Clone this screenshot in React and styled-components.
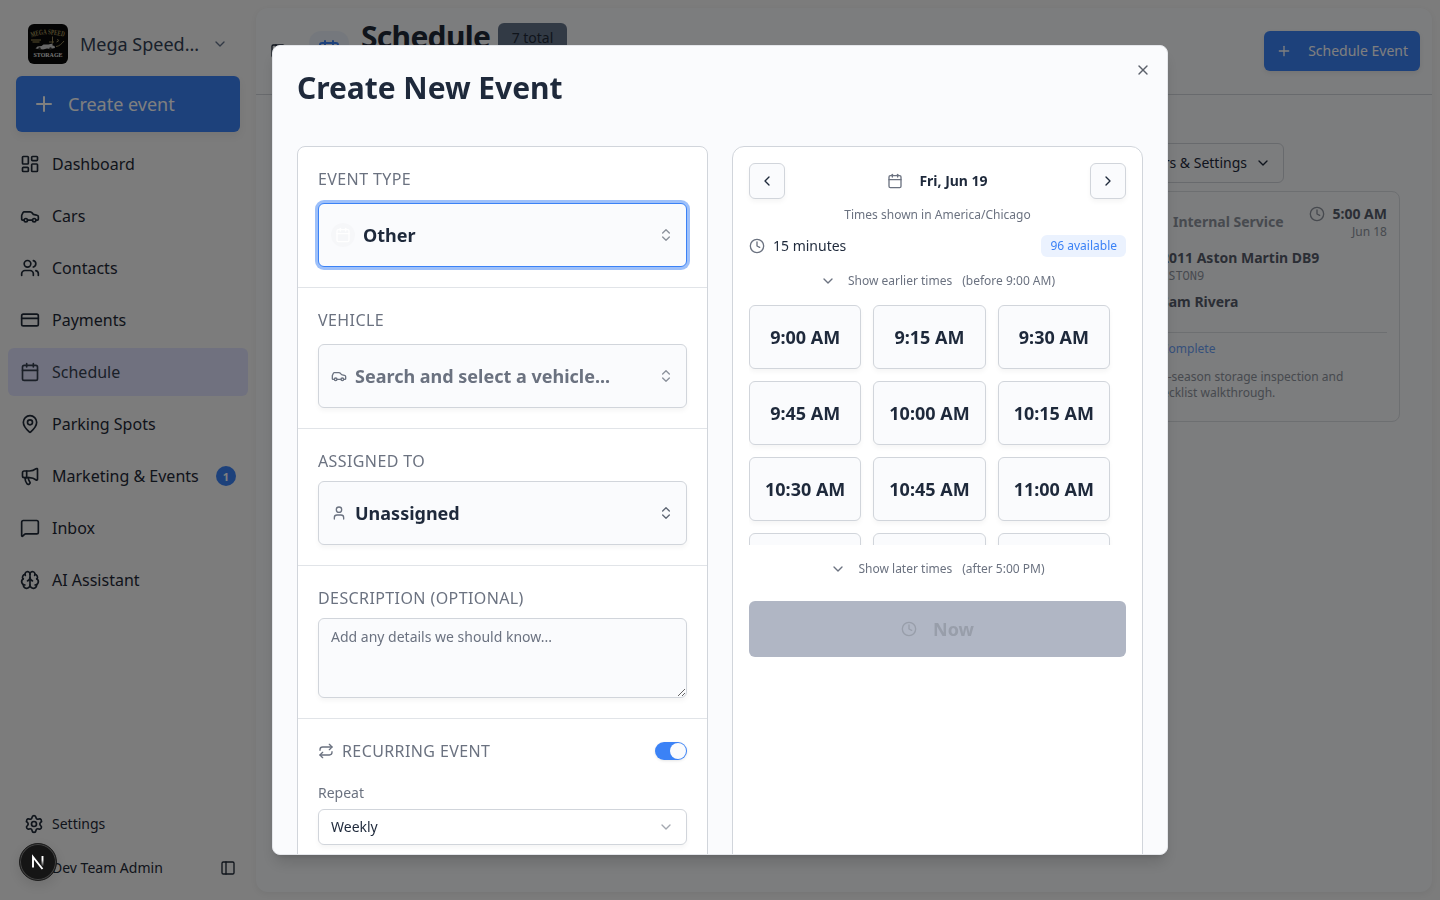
import React from "react";
import styled, { createGlobalStyle, css } from "styled-components";
import {
  LayoutDashboard, Car, Users, CreditCard, Calendar, MapPin, Megaphone,
  MessageSquare, Brain, Settings, PanelLeft, ChevronDown, ChevronLeft,
  ChevronRight, ChevronsUpDown, Plus, X, Clock, User, Repeat,
} from "lucide-react";

const c = {
  ink: "#1e293b",
  muted: "#6b7280",
  primary: "#3b82f6",
  border: "#d1d5db",
  surface: "#fafbfd",
};

const Global = createGlobalStyle`
  *, *::before, *::after { box-sizing: border-box; }
  html, body, #root { height: 100%; }
  body {
    margin: 0;
    overflow: hidden;
    background: #f8f8f8;
    color: ${c.ink};
    font-family: "Noto Sans", sans-serif;
    font-size: 14px;
    line-height: 20px;
  }
  button, textarea { font: inherit; color: inherit; margin: 0; }
  h1, h2, p { margin: 0; }
  svg { flex-shrink: 0; display: block; }
`;

const Shell = styled.div`
  display: flex;
  height: 900px;
`;

/* Sidebar */
const Sidebar = styled.aside`
  width: 256px;
  display: flex;
  flex-direction: column;
  padding: 16px 8px 12px;
`;
const OrgSwitch = styled.div`
  display: flex;
  align-items: center;
  gap: 12px;
  height: 56px;
  padding: 0 20px;
  font-size: 18px;
  line-height: 28px;
  color: #334155;
  span { width: 120px; white-space: nowrap; }
  > svg { color: #64748b; }
`;
const OrgLogo = styled.div`
  width: 40px;
  height: 40px;
  border-radius: 6px;
  overflow: hidden;
  background: #080808;
`;
const CreateButton = styled.button`
  display: flex;
  align-items: center;
  gap: 12px;
  height: 56px;
  margin: 4px 8px 8px;
  padding: 0 16px;
  border: 0;
  border-radius: 6px;
  background: ${c.primary};
  color: #fff;
  font-size: 18px;
  box-shadow: 0 4px 8px rgba(0, 0, 0, 0.06);
`;
const Nav = styled.nav`
  display: flex;
  flex-direction: column;
  gap: 4px;
  width: 240px;
`;
const NavItem = styled.a`
  display: flex;
  align-items: center;
  gap: 12px;
  height: 48px;
  padding: 0 12px;
  border-radius: 6px;
  font-size: 16px;
  color: ${(p) => (p.$active ? "#374151" : "#1f2937")};
  background: ${(p) => (p.$active ? "#e0e3ff" : "transparent")};
`;
const Count = styled.span`
  display: grid;
  place-items: center;
  width: 20px;
  height: 20px;
  margin-left: auto;
  border-radius: 50%;
  background: ${c.primary};
  color: #fff;
  font-size: 11px;
  font-weight: 700;
  line-height: 1;
`;
const SidebarFooter = styled.div`
  display: flex;
  flex-direction: column;
  gap: 4px;
  margin-top: auto;
  width: 240px;
`;
const FooterRow = styled.div`
  display: flex;
  align-items: center;
  gap: 8px;
  height: 40px;
  padding: 0 12px 0 ${(p) => (p.$account ? 44 : 16)}px;
  color: #1f2937;
  svg:last-child { margin-left: ${(p) => (p.$account ? "auto" : "0")}; }
`;

/* Page behind the dialog */
const Main = styled.main`
  flex: 1;
  margin: 8px 8px 8px 0;
  border-radius: 12px;
  background: #f8fafc;
  box-shadow: 0 2px 6px rgba(0, 0, 0, 0.06);
`;
const PageHeader = styled.header`
  display: flex;
  align-items: center;
  height: 87px;
  padding: 0 12px 0 14px;
  border-bottom: 1px solid ${c.border};
`;
const IconTile = styled.div`
  display: grid;
  place-items: center;
  width: 40px;
  height: 40px;
  margin: 0 12px 0 23px;
  border-radius: 12px;
  background: #ebf1fb;
  color: ${c.primary};
`;
const TitleRow = styled.div`
  display: flex;
  align-items: center;
  gap: 8px;
  margin-bottom: 28px;
  h1 {
    font-size: 30px;
    line-height: 36px;
    font-weight: 700;
    letter-spacing: -0.7px;
    color: #1f2937;
  }
`;
const TotalBadge = styled.span`
  height: 30px;
  margin-top: 2px;
  padding: 5px 13.5px;
  border-radius: 6px;
  background: #64748b;
  color: #1f2937;
  font-size: 14px;
`;
const ScheduleButton = styled.button`
  display: flex;
  align-items: center;
  gap: 16px;
  height: 40px;
  margin-left: auto;
  padding: 0 12px;
  border: 0;
  border-radius: 6px;
  background: ${c.primary};
  color: #fff;
  box-shadow: 0 2px 5px rgba(0, 0, 0, 0.08);
`;
const PageBody = styled.div`
  display: flex;
  flex-direction: column;
  align-items: flex-end;
  gap: 8px;
  padding: 48px 32px 0;
`;
const FilterButton = styled.button`
  display: flex;
  align-items: center;
  gap: 8px;
  height: 40px;
  margin-right: 116px;
  padding: 0 12px;
  border: 1px solid ${c.border};
  border-radius: 6px;
  background: transparent;
`;
const EventCard = styled.article`
  width: 264px;
  height: 231px;
  padding: 12px;
  border: 1px solid ${c.border};
  border-radius: 8px;
  opacity: 0.75;
`;
const CardTop = styled.div`
  display: flex;
  align-items: center;
  justify-content: space-between;
  margin-bottom: 8px;
  padding-left: 24px;
  font-weight: 700;
  color: ${c.muted};
`;
const CardTime = styled.div`
  text-align: right;
  div { display: flex; align-items: center; gap: 8px; }
  strong { font-weight: 700; color: ${c.ink}; }
  small { display: block; font-size: 12px; line-height: 16px; font-weight: 400; }
`;
const CardLine = styled.div`
  padding-left: 12px;
  white-space: nowrap;
  font-weight: 700;
`;
const Plate = styled.div`
  margin-bottom: 8px;
  padding-left: 12px;
  font: 12px/16px "Noto Sans Mono", "Roboto Mono", "Liberation Mono", monospace;
  color: ${c.muted};
`;
const CardStatus = styled.div`
  margin-top: 20px;
  padding: 8px 0 0 12px;
  border-top: 1px solid ${c.border};
  font-size: 12px;
  line-height: 16px;
  color: ${c.primary};
`;
const CardNote = styled.p`
  margin-top: 12px;
  font-size: 12px;
  line-height: 16px;
  color: ${c.muted};
`;

/* Dialog */
const Overlay = styled.div`
  position: fixed;
  inset: 0;
  display: grid;
  place-items: center;
  background: rgba(0, 0, 0, 0.5);
`;
const Dialog = styled.section`
  position: relative;
  width: 896px;
  height: 810px;
  padding: 24px;
  overflow: hidden;
  border: 1px solid #e5e7eb;
  border-radius: 8px;
  background: ${c.surface};
  box-shadow: 0 10px 15px -3px rgba(0, 0, 0, 0.15), 0 4px 6px -4px rgba(0, 0, 0, 0.15);
  h2 {
    height: 76px;
    font-size: 30px;
    line-height: 36px;
    font-weight: 700;
    letter-spacing: -0.05px;
  }
`;
const CloseButton = styled.button`
  position: absolute;
  top: 16px;
  right: 16px;
  padding: 0;
  border: 0;
  background: none;
  color: #5b616b;
`;
const Columns = styled.div`
  display: grid;
  grid-template-columns: 1fr 1fr;
  gap: 24px;
`;
const Panel = styled.div`
  height: 820px;
  border: 1px solid ${c.border};
  border-radius: ${(p) => p.$radius}px;
  background: #fff;
`;
const Section = styled.div`
  display: flex;
  flex-direction: column;
  gap: ${(p) => p.$gap || 8}px;
  padding: 20px;
  border-bottom: 1px solid #e1e4e8;
`;
const Label = styled.div`
  display: flex;
  align-items: center;
  gap: 8px;
  font-size: 16px;
  line-height: 24px;
  letter-spacing: 0.4px;
  text-transform: uppercase;
  color: ${c.muted};
`;
const fieldFrame = css`
  border: 1px solid ${c.border};
  border-radius: 6px;
  background: ${c.surface};
  box-shadow: 0 3px 5px rgba(0, 0, 0, 0.04);
`;
const Picker = styled.button`
  ${fieldFrame}
  display: flex;
  align-items: center;
  gap: 8px;
  height: 64px;
  padding: 0 12px;
  font-size: 18px;
  font-weight: 700;
  color: ${(p) => (p.$placeholder ? c.muted : c.ink)};
  svg { color: ${c.muted}; }
  > svg:last-child { margin-left: auto; color: ${c.ink}; opacity: ${(p) => (p.$strong ? 0.7 : 0.5)}; }
  ${(p) => p.$focused && css`
    border-color: ${c.primary};
    box-shadow: 0 0 0 3px rgba(59, 130, 246, 0.5);
  `}
`;
const TypeDot = styled.span`
  display: grid;
  place-items: center;
  width: 24px;
  height: 24px;
  border-radius: 50%;
  background: #f6f7f9;
  svg { color: #fff; }
`;
const Description = styled.textarea`
  ${fieldFrame}
  display: block;
  width: 100%;
  height: 80px;
  padding: 8px 12px;
  outline: 0;
  resize: vertical;
  &::placeholder { color: ${c.muted}; opacity: 1; }
`;
const RecurringRow = styled.div`
  display: flex;
  align-items: center;
  justify-content: space-between;
  margin-bottom: 14px;
`;
const Toggle = styled.span`
  display: flex;
  justify-content: flex-end;
  align-items: center;
  width: 32px;
  height: 18px;
  padding: 1px;
  border-radius: 9px;
  background: ${c.primary};
  box-shadow: 0 1px 3px rgba(0, 0, 0, 0.1);
  &::after {
    content: "";
    width: 16px;
    height: 16px;
    border-radius: 50%;
    background: ${c.surface};
  }
`;
const SmallLabel = styled.div`
  color: ${c.muted};
`;
const Select = styled.button`
  ${fieldFrame}
  display: flex;
  align-items: center;
  justify-content: space-between;
  height: 36px;
  padding: 0 12px;
  background: #fff;
  svg { opacity: 0.4; }
`;

const Slots = styled.div`
  display: flex;
  flex-direction: column;
  padding: 16px;
`;
const DateRow = styled.div`
  display: flex;
  align-items: center;
  justify-content: space-between;
`;
const ArrowButton = styled.button`
  ${fieldFrame}
  display: grid;
  place-items: center;
  width: 36px;
  height: 36px;
  padding: 0;
`;
const DateLabel = styled.div`
  display: flex;
  align-items: center;
  gap: 16px;
  font-weight: 700;
  svg { color: ${c.muted}; }
`;
const ZoneNote = styled.div`
  margin: 8px 0 12px;
  font-size: 12px;
  line-height: 16px;
  text-align: center;
  color: ${c.muted};
`;
const DurationRow = styled.div`
  display: flex;
  align-items: center;
  gap: 8px;
  height: 22px;
  svg { color: ${c.muted}; }
`;
const Available = styled.span`
  margin-left: auto;
  padding: 3px 9px;
  border-radius: 6px;
  background: #ebf2fe;
  color: ${c.primary};
  font-size: 12px;
  line-height: 16px;
`;
const MoreButton = styled.button`
  display: flex;
  align-items: center;
  justify-content: center;
  height: 32px;
  margin: 8px 0;
  padding: 0;
  border: 0;
  background: none;
  font-size: 12px;
  color: ${c.muted};
  svg { margin-right: 12px; }
  small { margin-left: 10px; font-size: 12px; }
`;
const SlotGrid = styled.div`
  display: grid;
  grid-template-columns: repeat(3, 1fr);
  grid-auto-rows: 64px;
  gap: 12px;
  height: 240px;
  padding-right: 16px;
  overflow: hidden;
`;
const Slot = styled.button`
  ${fieldFrame}
  padding: 0;
  font-size: 18px;
  font-weight: 700;
`;
const NowButton = styled.button`
  display: flex;
  align-items: center;
  justify-content: center;
  gap: 16px;
  height: 56px;
  margin-top: 8px;
  border: 0;
  border-radius: 6px;
  background: #b0b6c4;
  color: #989eaa;
  font-size: 18px;
  font-weight: 700;
`;

const DevBadge = styled.div`
  position: fixed;
  left: 19px;
  top: 843px;
  display: grid;
  place-items: center;
  width: 38px;
  height: 38px;
  border: 1px solid #1c1c1c;
  border-radius: 50%;
  background: #151515;
  box-shadow: inset 0 0 0 1px #444, 0 4px 14px rgba(0, 0, 0, 0.12);
`;

const navItems = [
  [LayoutDashboard, "Dashboard"],
  [Car, "Cars"],
  [Users, "Contacts"],
  [CreditCard, "Payments"],
  [Calendar, "Schedule"],
  [MapPin, "Parking Spots"],
  [Megaphone, "Marketing & Events", 1],
  [MessageSquare, "Inbox"],
  [Brain, "AI Assistant"],
];

const times = [
  "9:00 AM", "9:15 AM", "9:30 AM", "9:45 AM", "10:00 AM", "10:15 AM",
  "10:30 AM", "10:45 AM", "11:00 AM",
];

function StorageLogo() {
  return (
    <svg width="40" height="40" viewBox="0 0 40 40">
      <defs>
        <path id="logoArc" d="M3.5 13.2 Q20 7.5 37 13.2" />
      </defs>
      <text fontFamily="Liberation Serif, serif" fontWeight="700" fontSize="7.4" fill="#a5975c" textLength="33" lengthAdjust="spacingAndGlyphs">
        <textPath href="#logoArc">MEGA SPEED</textPath>
      </text>
      <path d="M3 16h10M4.5 18h7" stroke="#75683e" strokeWidth="1.3" />
      <path d="M7.5 24.5l2-2 4-.5 2-1.500h5l4-1v2l2 .5.5 2-5 1-3-.5-4 1z" fill="#cfcfcf" />
      <path d="M24.500 12.500v7M21 18h5M28 22.500c3 0 6-3 8-5.500M29.500 15l1 2-2 1" stroke="#94875a" strokeWidth="1" fill="none" />
      <circle cx="11.500" cy="24.500" r="1.200" fill="#333" />
      <circle cx="22.500" cy="24.500" r="1.200" fill="#333" />
      <text x="5.5" y="33" fontFamily="Liberation Serif, serif" fontWeight="700" fontSize="7" fill="#e5e5e5" textLength="29" lengthAdjust="spacingAndGlyphs">STORAGE</text>
    </svg>
  );
}

export default function App() {
  return (
    <>
      <Global />
      <Shell>
        <Sidebar>
          <OrgSwitch>
            <OrgLogo><StorageLogo /></OrgLogo>
            <span>Mega Speed...</span>
            <ChevronDown size={16} />
          </OrgSwitch>
          <CreateButton><Plus size={24} />Create event</CreateButton>
          <Nav>
            {navItems.map(([Icon, name, count]) => (
              <NavItem key={name} $active={name === "Schedule"}>
                <Icon size={20} />
                {name}
                {count && <Count>{count}</Count>}
              </NavItem>
            ))}
          </Nav>
          <SidebarFooter>
            <FooterRow><Settings size={20} />Settings</FooterRow>
            <FooterRow $account>Dev Team Admin<PanelLeft size={16} /></FooterRow>
          </SidebarFooter>
        </Sidebar>

        <Main>
          <PageHeader>
            <PanelLeft size={16} />
            <IconTile><Calendar size={24} /></IconTile>
            <TitleRow>
              <h1>Schedule</h1>
              <TotalBadge>7 total</TotalBadge>
            </TitleRow>
            <ScheduleButton><Plus size={16} />Schedule Event</ScheduleButton>
          </PageHeader>
          <PageBody>
            <FilterButton>Filters &amp; Settings<ChevronDown size={16} /></FilterButton>
            <EventCard>
              <CardTop>
                Internal Service
                <CardTime>
                  <div><Clock size={16} /><strong>5:00 AM</strong></div>
                  <small>Jun 18</small>
                </CardTime>
              </CardTop>
              <CardLine>2011 Aston Martin DB9</CardLine>
              <Plate>ASTON9</Plate>
              <CardLine>Sam Rivera</CardLine>
              <CardStatus>Complete</CardStatus>
              <CardNote>Pre-season storage inspection and checklist walkthrough.</CardNote>
            </EventCard>
          </PageBody>
        </Main>
      </Shell>

      <Overlay>
        <Dialog>
          <h2>Create New Event</h2>
          <CloseButton><X size={16} /></CloseButton>
          <Columns>
            <Panel $radius={8}>
              <Section $gap={12}>
                <Label>Event Type</Label>
                <Picker $focused>
                  <TypeDot><Calendar size={16} /></TypeDot>
                  Other
                  <ChevronsUpDown size={16} />
                </Picker>
              </Section>
              <Section $gap={12}>
                <Label>Vehicle</Label>
                <Picker $placeholder>
                  <Car size={16} />
                  Search and select a vehicle...
                  <ChevronsUpDown size={16} />
                </Picker>
              </Section>
              <Section>
                <Label>Assigned To</Label>
                <Picker $strong>
                  <User size={16} />
                  Unassigned
                  <ChevronsUpDown size={16} />
                </Picker>
              </Section>
              <Section>
                <Label>Description (Optional)</Label>
                <Description placeholder="Add any details we should know..." />
              </Section>
              <Section $gap={6}>
                <RecurringRow>
                  <Label><Repeat size={16} />Recurring Event</Label>
                  <Toggle />
                </RecurringRow>
                <SmallLabel>Repeat</SmallLabel>
                <Select>Weekly<ChevronDown size={16} /></Select>
              </Section>
            </Panel>

            <Panel $radius={12}>
              <Slots>
                <DateRow>
                  <ArrowButton><ChevronLeft size={16} /></ArrowButton>
                  <DateLabel><Calendar size={16} />Fri, Jun 19</DateLabel>
                  <ArrowButton><ChevronRight size={16} /></ArrowButton>
                </DateRow>
                <ZoneNote>Times shown in America/Chicago</ZoneNote>
                <DurationRow>
                  <Clock size={16} />15 minutes
                  <Available>96 available</Available>
                </DurationRow>
                <MoreButton><ChevronDown size={16} />Show earlier times<small>(before 9:00 AM)</small></MoreButton>
                <SlotGrid>
                  {times.map((t) => <Slot key={t}>{t}</Slot>)}
                  <Slot /><Slot /><Slot />
                </SlotGrid>
                <MoreButton><ChevronDown size={16} />Show later times<small>(after 5:00 PM)</small></MoreButton>
                <NowButton><Clock size={16} />Now</NowButton>
              </Slots>
            </Panel>
          </Columns>
        </Dialog>
      </Overlay>

      <DevBadge>
        <svg width="16" height="16" viewBox="0 0 16 16" fill="none">
          <defs>
            <linearGradient id="stem" x1="0" y1="2" x2="0" y2="12" gradientUnits="userSpaceOnUse">
              <stop offset="0.4" stopColor="#fff" />
              <stop offset="1" stopColor="#fff" stopOpacity="0.1" />
            </linearGradient>
          </defs>
          <path d="M3 13.5V3l9.500 12" stroke="#fff" strokeWidth="1.9" />
          <path d="M12.500 2v10" stroke="url(#stem)" strokeWidth="1.9" />
        </svg>
      </DevBadge>
    </>
  );
}
